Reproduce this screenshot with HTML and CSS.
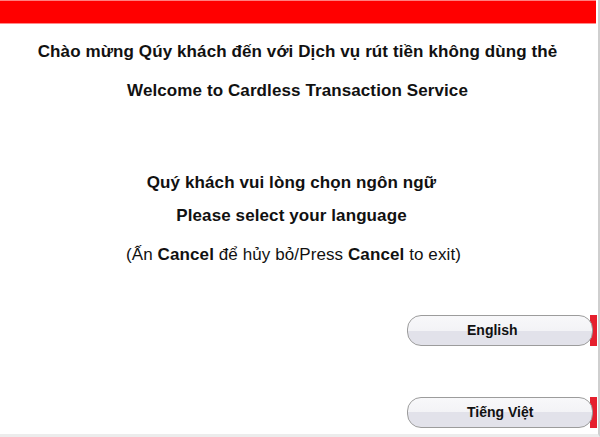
FILE: index.html
```html
<!DOCTYPE html>
<html>
<head>
<meta charset="utf-8">
<link rel="stylesheet" href="styles.css">
</head>
<body>
<div class="screen">
  <div class="topbar"></div>
  <div class="content">
    <p class="line l1">Chào mừng Qúy khách đến với Dịch vụ rút tiền không dùng thẻ</p>
    <p class="line l2">Welcome to Cardless Transaction Service</p>
  </div>
  <div class="content prompt">
    <p class="line l3">Quý khách vui lòng chọn ngôn ngữ</p>
    <p class="line l4">Please select your language</p>
    <p class="line l5 normal">(Ấn <b>Cancel</b> để hủy bỏ/Press <b>Cancel</b> to exit)</p>
  </div>
  <div class="buttons">
    <div class="btn-wrap"><div class="btn">English</div></div>
    <div class="btn-wrap"><div class="btn">Tiếng Việt</div></div>
  </div>
</div>
</body>
</html>
```

FILE: styles.css
```css
html, body {
  margin: 0;
  padding: 0;
  background: #ffffff;
}
.screen {
  width: 598px;
  height: 434px;
  border-right: 2px solid #cfcfcf;
  border-bottom: 3px solid #ececec;
  font-family: "Liberation Sans", Arial, sans-serif;
  color: #111111;
  display: flex;
  flex-direction: column;
  overflow: hidden;
}
.topbar {
  width: 596px;
  height: 22px;
  background: #ff0000;
  border-top: 1px solid #ff8080;
  border-bottom: 1px solid #ff8a8a;
  box-sizing: content-box;
}
.content {
  display: flex;
  flex-direction: column;
  align-items: center;
  padding-right: 3px;
}
.prompt {
  padding-right: 15px;
}
.line {
  margin: 0;
  font-size: 17px;
  letter-spacing: 0.1px;
  font-weight: bold;
  line-height: 20px;
  text-align: center;
  white-space: nowrap;
}
.normal {
  font-weight: normal;
}
.l1 { margin-top: 18px; }
.l2 { margin-top: 19px; }
.l3 { margin-top: 72px; }
.l4 { margin-top: 13px; }
.l5 { margin-top: 19px; padding-left: 4px; }
.buttons {
  display: flex;
  flex-direction: column;
  align-items: flex-end;
  gap: 51px;
  margin-top: 50px;
}
.btn-wrap {
  width: 191px;
  height: 31px;
  background: linear-gradient(to right, transparent 183px, #e5202e 183px, #e5202e 190px, transparent 190px);
}
.btn {
  width: 184px;
  height: 29px;
  border: 1px solid #9c9c9c;
  border-radius: 14px;
  background: linear-gradient(to bottom, #f8f8fa 0%, #f3f3f6 50%, #e2e2ea 50%, #e2e2ea 100%);
  box-sizing: content-box;
  font-size: 14px;
  font-weight: bold;
  line-height: 29px;
  text-indent: 59px;
  white-space: nowrap;
}
```
